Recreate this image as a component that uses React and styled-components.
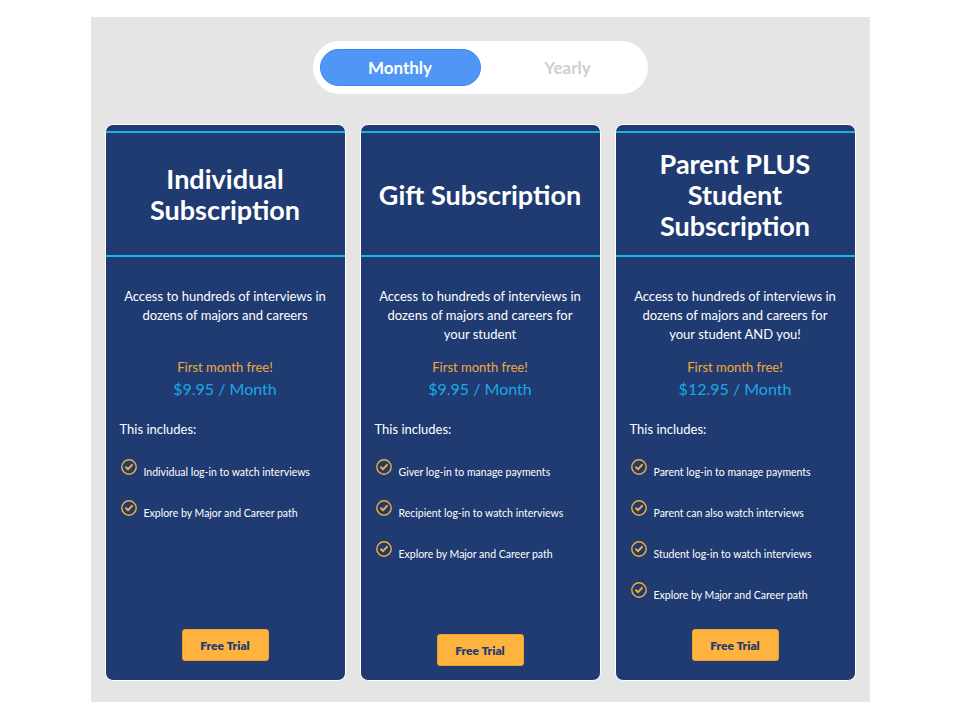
import React from "react";
import styled, { createGlobalStyle } from "styled-components";

const GlobalStyle = createGlobalStyle`
  body {
    margin: 0;
    background: #ffffff;
    font-family: Lato, "Open Sans", sans-serif;
  }
`;

const plans = [
  {
    title: ["Individual", "Subscription"],
    desc: "Access to hundreds of interviews in dozens of majors and careers",
    price: "$9.95 / Month",
    items: ["Individual log-in to watch interviews", "Explore by Major and Career path"],
    bottom: 19,
  },
  {
    title: ["Gift Subscription"],
    desc: "Access to hundreds of interviews in dozens of majors and careers for your student",
    price: "$9.95 / Month",
    items: [
      "Giver log-in to manage payments",
      "Recipient log-in to watch interviews",
      "Explore by Major and Career path",
    ],
    bottom: 14,
  },
  {
    title: ["Parent PLUS", "Student", "Subscription"],
    desc: "Access to hundreds of interviews in dozens of majors and careers for your student AND you!",
    price: "$12.95 / Month",
    items: [
      "Parent log-in to manage payments",
      "Parent can also watch interviews",
      "Student log-in to watch interviews",
      "Explore by Major and Career path",
    ],
    bottom: 19,
  },
];

const CheckIcon = () => (
  <svg width="16" height="16" viewBox="0 0 16 16">
    <circle cx="8" cy="8" r="7.2" fill="none" stroke="#f5ad36" strokeWidth="1.4" />
    <path d="M5 8.2 L7.1 10.2 L11 5.9" fill="none" stroke="#f5ad36" strokeWidth="2" strokeLinecap="round" strokeLinejoin="round" />
  </svg>
);

const App = () => {
  return (
    <>
      <GlobalStyle />
      <Page>
        <Panel>
          <Toggle>
            <Segment active>Monthly</Segment>
            <Segment>Yearly</Segment>
          </Toggle>
          <Cards>
            {plans.map((p) => (
              <Card key={p.title.join(" ")}>
                <Header>
                  <Title>
                    {p.title.map((t) => (
                      <div key={t}>{t}</div>
                    ))}
                  </Title>
                </Header>
                <Body>
                  <Desc>{p.desc}</Desc>
                  <Offer>First month free!</Offer>
                  <Price>{p.price}</Price>
                  <Includes>This includes:</Includes>
                  <List>
                    {p.items.map((it) => (
                      <Item key={it}>
                        <CheckIcon />
                        <span>{it}</span>
                      </Item>
                    ))}
                  </List>
                </Body>
                <Footer bottom={p.bottom}>
                  <TrialButton>Free Trial</TrialButton>
                </Footer>
              </Card>
            ))}
          </Cards>
        </Panel>
      </Page>
    </>
  );
};

export default App;

const Page = styled.div`
  width: 960px;
  height: 720px;
  padding-top: 17px;
  box-sizing: border-box;
  display: flex;
  justify-content: center;
  align-items: flex-start;
`;

const Panel = styled.div`
  width: 779px;
  height: 685px;
  box-sizing: border-box;
  background: #e5e5e5;
  padding: 24px 14px 21px;
  display: flex;
  flex-direction: column;
  align-items: center;
`;

const Toggle = styled.div`
  width: 335px;
  height: 53px;
  box-sizing: border-box;
  background: #ffffff;
  border-radius: 27px;
  padding: 8px 7px;
  display: flex;
`;

const Segment = styled.div`
  width: ${(p) => (p.active ? "161px" : "160px")};
  height: 37px;
  box-sizing: border-box;
  border-radius: 19px;
  display: flex;
  align-items: center;
  justify-content: center;
  padding-left: ${(p) => (p.active ? "0" : "14px")};
  font-size: 17px;
  font-weight: 700;
  background: ${(p) => (p.active ? "#4f96f7" : "transparent")};
  border: ${(p) => (p.active ? "1px solid #3f86ea" : "none")};
  color: ${(p) => (p.active ? "#ffffff" : "#cfcfcf")};
`;

const Cards = styled.div`
  margin-top: 30px;
  width: 100%;
  display: grid;
  grid-template-columns: repeat(3, 241px);
  gap: 14px;
`;

const Card = styled.div`
  height: 557px;
  box-sizing: border-box;
  background: #1f3b72;
  border: 1px solid #ffffff;
  border-radius: 8px;
  display: flex;
  flex-direction: column;
  color: #ffffff;
`;

const Header = styled.div`
  margin-top: 6px;
  height: 126px;
  box-sizing: border-box;
  border-top: 2px solid #17b3ef;
  border-bottom: 2px solid #17b3ef;
  display: flex;
  align-items: center;
  justify-content: center;
`;

const Title = styled.div`
  font-size: 27px;
  line-height: 31px;
  font-weight: 700;
  text-align: center;
`;

const Body = styled.div`
  padding: 30px 14px 0;
  display: flex;
  flex-direction: column;
`;

const Desc = styled.div`
  min-height: 57px;
  font-size: 13px;
  line-height: 19px;
  text-align: center;
  padding: 0 2px;
`;

const Offer = styled.div`
  margin-top: 14px;
  font-size: 13px;
  line-height: 19px;
  text-align: center;
  color: #f5a93a;
`;

const Price = styled.div`
  margin-top: 1px;
  font-size: 16px;
  line-height: 22px;
  text-align: center;
  color: #1ba8e8;
`;

const Includes = styled.div`
  margin-top: 20px;
  font-size: 13px;
  line-height: 19px;
`;

const List = styled.div`
  margin-top: 20px;
  display: flex;
  flex-direction: column;
  gap: 20px;
`;

const Item = styled.div`
  display: flex;
  align-items: flex-start;
  gap: 7px;
  padding-left: 1px;
  font-size: 10.5px;
  line-height: 15px;

  span {
    padding-top: 6px;
  }
`;

const Footer = styled.div`
  margin-top: auto;
  padding-bottom: ${(p) => p.bottom}px;
  display: flex;
  justify-content: center;
`;

const TrialButton = styled.button`
  width: 87px;
  height: 32px;
  border: 1px solid #f0a02c;
  border-radius: 3px;
  background: #fdb33e;
  color: #1f3b72;
  font-family: inherit;
  font-size: 12px;
  font-weight: 800;
  cursor: pointer;
`;
